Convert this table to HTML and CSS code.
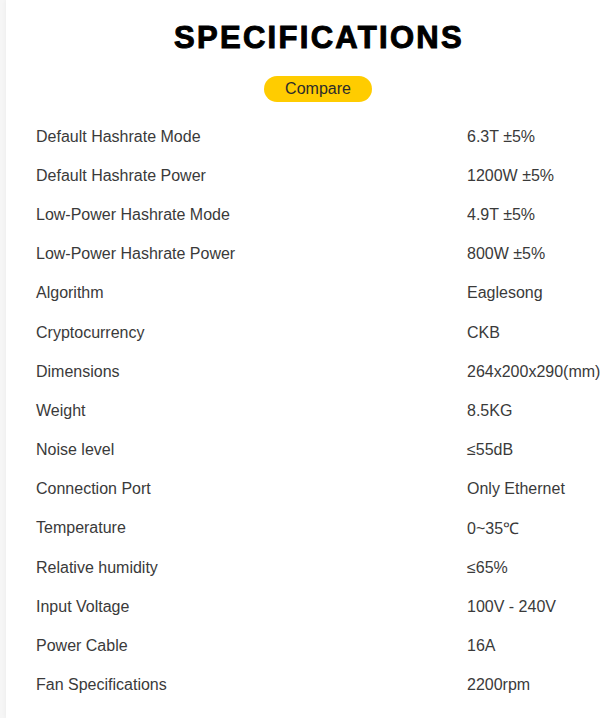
FILE: index.html
```html
<!DOCTYPE html>
<html>
<head>
<meta charset="utf-8">
<link rel="stylesheet" href="styles.css">
</head>
<body>
<div class="page">
  <section class="specs">
    <h2 class="specs-title">SPECIFICATIONS</h2>
    <div class="compare-wrap"><button class="compare-btn">Compare</button></div>
    <div class="spec-list">
      <div class="spec-row"><span class="spec-label">Default Hashrate Mode</span><span class="spec-value">6.3T ±5%</span></div>
      <div class="spec-row"><span class="spec-label">Default Hashrate Power</span><span class="spec-value">1200W ±5%</span></div>
      <div class="spec-row"><span class="spec-label">Low-Power Hashrate Mode</span><span class="spec-value">4.9T ±5%</span></div>
      <div class="spec-row"><span class="spec-label">Low-Power Hashrate Power</span><span class="spec-value">800W ±5%</span></div>
      <div class="spec-row"><span class="spec-label">Algorithm</span><span class="spec-value">Eaglesong</span></div>
      <div class="spec-row"><span class="spec-label">Cryptocurrency</span><span class="spec-value">CKB</span></div>
      <div class="spec-row"><span class="spec-label">Dimensions</span><span class="spec-value">264x200x290(mm)</span></div>
      <div class="spec-row"><span class="spec-label">Weight</span><span class="spec-value">8.5KG</span></div>
      <div class="spec-row"><span class="spec-label">Noise level</span><span class="spec-value">≤55dB</span></div>
      <div class="spec-row"><span class="spec-label">Connection Port</span><span class="spec-value">Only Ethernet</span></div>
      <div class="spec-row"><span class="spec-label">Temperature</span><span class="spec-value">0~35℃</span></div>
      <div class="spec-row"><span class="spec-label">Relative humidity</span><span class="spec-value">≤65%</span></div>
      <div class="spec-row"><span class="spec-label">Input Voltage</span><span class="spec-value">100V - 240V</span></div>
      <div class="spec-row"><span class="spec-label">Power Cable</span><span class="spec-value">16A</span></div>
      <div class="spec-row"><span class="spec-label">Fan Specifications</span><span class="spec-value">2200rpm</span></div>
    </div>
  </section>
</div>
</body>
</html>
```
FILE: styles.css
```css
html, body {
  margin: 0;
  padding: 0;
  overflow: hidden;
  background: #f6f6f6;
  font-family: "Liberation Sans", Arial, sans-serif;
}
.page {
  margin-left: 6px;
  width: 624px;
  height: 718px;
  background: #fff;
  box-shadow: 0 0 5px rgba(0,0,0,0.05);
}
.specs {
  padding-top: 20px;
}
.specs-title {
  margin: 0;
  padding-left: 2px;
  text-align: center;
  font-size: 31px;
  line-height: 36px;
  font-weight: 900;
  letter-spacing: 2.3px;
  color: #000;
  -webkit-text-stroke: 1px #000;
}
.compare-wrap {
  display: flex;
  justify-content: center;
  margin-top: 20px;
}
.compare-btn {
  width: 108px;
  height: 26px;
  border: none;
  border-radius: 13px;
  background: #ffcc00;
  color: #2b2b2b;
  font-family: "Liberation Sans", Arial, sans-serif;
  font-size: 16px;
  padding: 0;
}
.spec-list {
  margin-top: 15px;
  padding-left: 30px;
}
.spec-row {
  display: grid;
  grid-template-columns: 431px 1fr;
  height: 39.2px;
  align-items: center;
  font-size: 16px;
  color: #3a3a3a;
  white-space: nowrap;
}
```
